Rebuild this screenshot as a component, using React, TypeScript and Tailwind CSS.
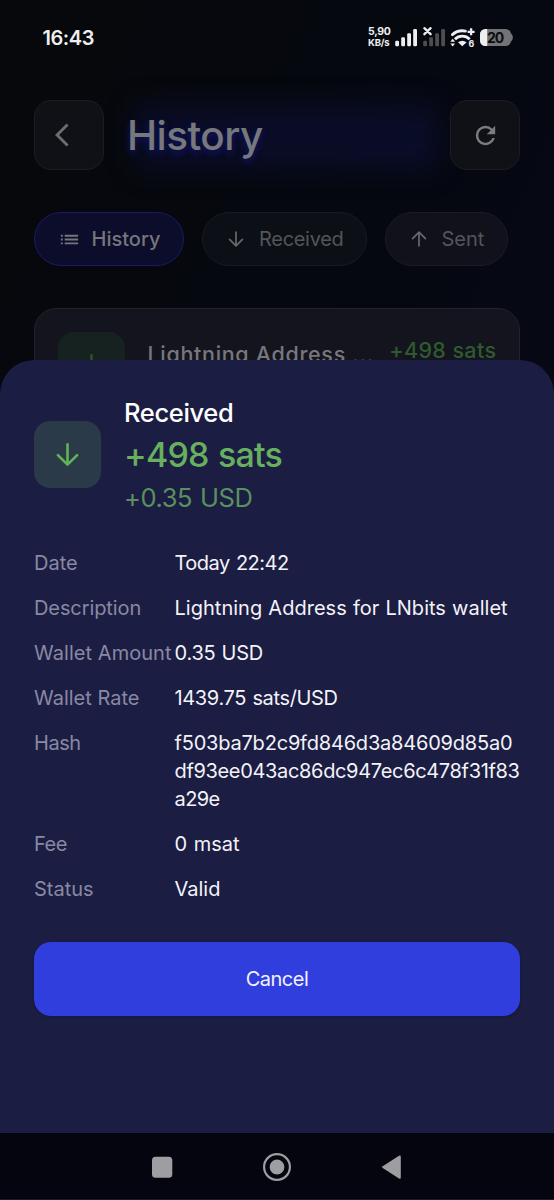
import type { ReactNode } from "react";

function ArrowIcon({ className }: { className: string }) {
  return (
    <svg viewBox="0 0 24 24" className={className} fill="none" stroke="currentColor" strokeWidth="1.9" strokeLinecap="round" strokeLinejoin="round">
      <path d="M12 4.6V19M5 12.4l7 7 7-7" />
    </svg>
  );
}

function StatusBar() {
  return (
    <div className="flex h-[75px] items-center pl-[42.5px] text-[#eeeef0]">
      <span className="w-[325.5px] text-[20px] leading-none font-semibold tracking-[-0.45px]">16:43</span>
      <div className="flex w-[26px] flex-col text-[10.5px] leading-[11px] font-bold whitespace-nowrap">
        <span className="-mt-[2px] mb-px tracking-[-0.3px]">5,90</span>
        <span className="text-[9.5px] leading-[10px] tracking-[-0.2px]">KB/s</span>
      </div>
      <svg className="h-[22px] w-[120px]" viewBox="394 26 120 22" fill="currentColor">
        <rect x="395.2" y="39.8" width="3.8" height="5.4" rx="1.2" />
        <rect x="401.2" y="36.2" width="3.8" height="9" rx="1.2" />
        <rect x="407.2" y="32.2" width="3.8" height="13" rx="1.2" />
        <rect x="413.2" y="28" width="3.8" height="17.2" rx="1.2" />
        <g fill="#4c4d51">
          <rect x="423.2" y="39.8" width="3.8" height="5.4" rx="1.2" />
          <rect x="429.2" y="36.2" width="3.8" height="9" rx="1.2" />
          <rect x="435.2" y="32.2" width="3.8" height="13" rx="1.2" />
          <rect x="441.2" y="28" width="3.8" height="17.2" rx="1.2" />
        </g>
        <path d="M424.4 27.2l6.2 6m0-6l-6.2 6" stroke="currentColor" strokeWidth="2.3" strokeLinecap="round" />
        <g fill="none" stroke="currentColor" strokeWidth="2.9">
          <path d="M452.4 33.6a15.5 15.5 0 0 1 13-3.5" strokeLinecap="round" />
          <path d="M454.9 38.2a10.5 10.5 0 0 1 14.8 0" />
          <path d="M471.1 27.3v7m-3.5-3.5h7" strokeWidth="2.3" />
        </g>
        <path d="M458 41.3q4.3-3.2 8.6 0l-4.3 4z" />
        <path d="M452.7 37.8l2.4 3h-4.8zM452.7 45.4l2.4-3h-4.8z" />
        <text x="468.6" y="45.5" fontSize="8.8" fontWeight="700">6</text>
        <rect x="480" y="28" width="31" height="17" rx="5.5" fill="#737377" />
        <path d="M510.5 31.8q2.4 2 2.4 4.7t-2.4 4.7z" fill="#737377" />
        <path d="M485.5 28h1.7v17h-1.7a5.5 5.5 0 0 1-5.5-5.5v-6a5.5 5.5 0 0 1 5.5-5.5z" />
        <text x="487" y="41.7" fontSize="14" fontWeight="700" letterSpacing="-1" fill="#0b0c12">20</text>
      </svg>
    </div>
  );
}

function SquareButton({ children }: { children: ReactNode }) {
  return (
    <button className="relative flex h-[70px] w-[70px] shrink-0 items-center justify-center rounded-[17px] border border-[#1c1d23] bg-[#101116] text-[#7c7c7e]">
      {children}
    </button>
  );
}

function Header() {
  return (
    <header className="flex items-center px-[34px] pt-[25px]">
      <SquareButton>
        <svg viewBox="0 0 24 24" className="size-7 text-[#6c6c6f]" fill="currentColor">
          <path d="M11.67 3.87L9.9 2.1 0 12l9.9 9.9 1.77-1.77L3.54 12z" />
        </svg>
      </SquareButton>
      <div className="relative ml-[23px] flex h-[60px] flex-1 items-center">
        <div className="absolute top-0 right-1 -bottom-1 left-2 bg-[#0d0f34]/65 blur-[13px]" />
        <h1 className="relative mt-[3px] text-[40.5px] leading-none font-medium tracking-[-0.55px] text-[#77787c] [text-shadow:0_3px_6px_#11136a]">
          History
        </h1>
      </div>
      <div className="ml-2">
        <SquareButton>
          <svg viewBox="0 0 24 24" className="size-[29px]" fill="currentColor">
            <path d="M17.65 6.35A7.96 7.96 0 0 0 12 4a8 8 0 1 0 7.73 10h-2.08A6 6 0 1 1 12 6c1.66 0 3.14.69 4.22 1.78L13 11h7V4l-2.35 2.35z" />
          </svg>
        </SquareButton>
      </div>
    </header>
  );
}

function Filters() {
  return (
    <div className="mt-[42px] flex gap-[17.5px] pl-[34px] text-[20px] leading-none">
      <div className="flex h-[54px] w-[150px] items-center rounded-full border-[1.5px] border-[#191b66] bg-[#0c0d2b] pl-[23px] font-medium text-[#75767c]">
        <svg viewBox="0 0 24 24" className="size-[23px]" fill="currentColor">
          <path d="M3 13h2v-2H3v2zm0 4h2v-2H3v2zm0-8h2V7H3v2zm4 4h14v-2H7v2zm0 4h14v-2H7v2zM7 7v2h14V7H7z" />
        </svg>
        <span className="ml-[10.5px]">History</span>
      </div>
      <div className="flex h-[54px] w-[165.5px] items-center rounded-full border border-[#191b24] bg-[#0d0f17] pl-[22.5px] text-[#54555a]">
        <ArrowIcon className="size-[22px] text-[#66676b]" />
        <span className="ml-[12px] tracking-[-0.3px]">Received</span>
      </div>
      <div className="flex h-[54px] w-[123.5px] items-center rounded-full border border-[#1b1b25] bg-[#10111a] pl-[22.5px] text-[#54555a]">
        <ArrowIcon className="size-[22px] rotate-180 text-[#66676b]" />
        <span className="ml-[11.5px]">Sent</span>
      </div>
    </div>
  );
}

function HistoryCard() {
  return (
    <div className="mx-[34px] mt-[42px] flex h-[114px] items-start rounded-[22px] border border-[#21222c] bg-[#14141e] px-[22.5px] pt-[22.5px]">
      <div className="flex size-[67px] shrink-0 items-center justify-center rounded-[16px] bg-[#152220]">
        <ArrowIcon className="size-[33px] text-[#2b5030]" />
      </div>
      <div className="mt-[8px] ml-[23px] flex w-[232px] text-[21.5px] leading-7 font-medium tracking-[0.68px] whitespace-nowrap text-[#77777d]">
        Lightning Address&nbsp;<span className="text-[#3c3c46]">...</span>
      </div>
      <div className="mt-[4px] ml-[10px] text-[21.5px] leading-7 font-medium tracking-[0.4px] whitespace-nowrap text-[#2f5a30]">+498 sats</div>
    </div>
  );
}

const details = [
  { label: "Date", labelClass: "tracking-[0px]", lines: [{ text: "Today 22:42", cls: "tracking-[-0.5px] [word-spacing:1px]" }] },
  { label: "Description", labelClass: "tracking-[-0.1px]", lines: [{ text: "Lightning Address for LNbits wallet", cls: "tracking-[0.02px] [word-spacing:0.5px]" }] },
  { label: "Wallet Amount", labelClass: "tracking-[0.05px]", lines: [{ text: "0.35 USD", cls: "tracking-[-0.2px] [word-spacing:0.5px]" }] },
  { label: "Wallet Rate", labelClass: "tracking-[0px]", lines: [{ text: "1439.75 sats/USD", cls: "tracking-[-0.35px] [word-spacing:1px]" }] },
  {
    label: "Hash",
    labelClass: "tracking-[-0.45px]",
    lines: [
      { text: "f503ba7b2c9fd846d3a84609d85a0", cls: "tracking-[-0.2px]" },
      { text: "df93ee043ac86dc947ec6c478f31f83", cls: "tracking-[-0.34px]" },
      { text: "a29e", cls: "tracking-[-0.6px]" },
    ],
  },
  { label: "Fee", labelClass: "tracking-[-0.45px]", lines: [{ text: "0 msat", cls: "tracking-[0px] [word-spacing:1px]" }] },
  { label: "Status", labelClass: "tracking-[0px]", lines: [{ text: "Valid", cls: "tracking-[0px]" }] },
];

function DetailSheet() {
  return (
    <section className="absolute inset-x-0 top-[360px] flex h-[773px] flex-col rounded-t-[34px] bg-[#1c1d43] px-[34px]">
      <div className="flex items-start pt-[37px]">
        <div className="mt-[24px] flex size-[67px] items-center justify-center rounded-[16px] bg-[#2a3a48] text-[#62b256]">
          <ArrowIcon className="size-[33px]" />
        </div>
        <div className="ml-[23px] flex flex-col whitespace-nowrap">
          <span className="text-[25.5px] leading-[32px] font-medium tracking-[-0.35px] text-white">Received</span>
          <span className="text-[34px] leading-[52px] font-medium tracking-[-0.8px] text-[#66b05e] [word-spacing:1px]">+498 sats</span>
          <span className="text-[25.5px] leading-[33px] tracking-[-0.4px] text-[#58915f] [word-spacing:1px]">+0.35 USD</span>
        </div>
      </div>
      <dl className="mt-[35px] flex flex-col gap-[17px] text-[20px] leading-7 whitespace-nowrap">
        {details.map((d) => (
          <div key={d.label} className="flex">
            <dt className={`w-[140.5px] shrink-0 font-normal text-[#8889a2] ${d.labelClass}`}>{d.label}</dt>
            <dd className="text-[#f3f3f8]">
              {d.lines.map((l) => (
                <div key={l.text} className={l.cls}>{l.text}</div>
              ))}
            </dd>
          </div>
        ))}
      </dl>
      <button className="mt-[39px] flex h-[73.5px] items-center justify-center rounded-[17px] bg-[#313ede] text-[20px] tracking-[-0.5px] text-[#f1f2fe] shadow-[0_1px_3px_rgba(0,0,30,0.25)]">
        Cancel
      </button>
    </section>
  );
}

function NavBar() {
  return (
    <nav className="absolute inset-x-0 bottom-0 flex h-[67px] items-center justify-center border-b border-[#1b1b2c] bg-[#04050e] text-[#9d9da2]">
      <svg viewBox="0 0 260 30" className="mt-px h-[30px] w-[260px]" fill="currentColor">
        <rect x="5" y="4.7" width="20.3" height="21" rx="3.5" />
        <circle cx="130" cy="15" r="7.4" />
        <circle cx="130" cy="15" r="12.9" fill="none" stroke="currentColor" strokeWidth="2.2" />
        <path d="M235.7 14.3L252 3.8q1.8-1 1.8 1v20.7q0 2-1.8 1L235.7 16q-1.2-.8 0-1.7z" />
      </svg>
    </nav>
  );
}

export default function App() {
  return (
    <div className="relative h-[1200px] w-[554px] overflow-hidden bg-linear-to-br from-[#07080b] via-[#050811] to-[#0b0a1c] font-['Inter',sans-serif]">
      <StatusBar />
      <Header />
      <Filters />
      <HistoryCard />
      <DetailSheet />
      <NavBar />
    </div>
  );
}
